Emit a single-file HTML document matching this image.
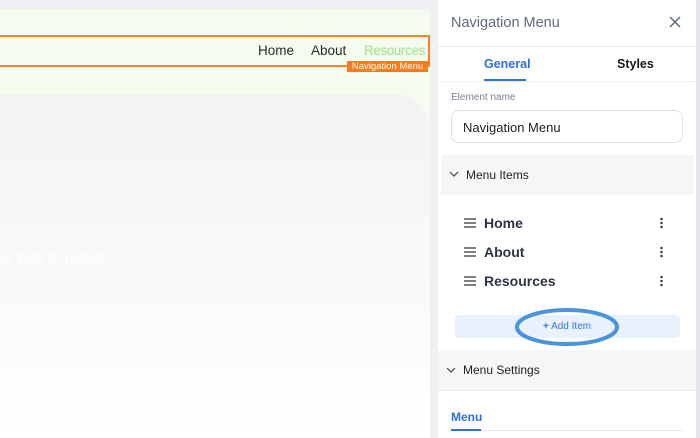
<!DOCTYPE html>
<html><head><style>
*{margin:0;padding:0;box-sizing:border-box}
body{width:700px;height:438px;overflow:hidden;position:relative;background:#eef0f3;font-family:"Liberation Sans",sans-serif}
.a{position:absolute}
.t{white-space:nowrap}
</style></head><body>
<div class="a" style="left:0;top:0;width:438px;height:438px;background:#eef0f3"></div>
<div class="a" style="left:0;top:9px;width:430px;height:429px;background:#f3fcee"></div>
<div class="a" style="left:0;top:35px;width:430px;height:32px;border:2px solid #fb8424;border-left:none"></div>
<div class="a t" style="left:258px;top:43px;font-size:13.5px;color:#2b2b2b">Home</div>
<div class="a t" style="left:311px;top:43px;font-size:13.5px;color:#2b2b2b">About</div>
<div class="a t" style="left:364px;top:43px;font-size:13.5px;color:#a6e08c;letter-spacing:-0.4px">Resources</div>
<div class="a t" style="left:347px;top:61px;width:81px;height:11px;background:#fb7a1a;color:#fff;font-size:9.5px;line-height:11px;text-align:center">Navigation Menu</div>
<div class="a" style="left:0;top:94px;width:430px;height:344px;border-top-right-radius:36px;background:linear-gradient(#f3f3f3,#ffffff)"></div>
<div class="a t" style="left:0;top:250px;font-size:15px;color:#fff">ur kids to grows</div>

<div class="a" style="left:438px;top:0;width:258px;height:438px;background:#fff"></div>
<div class="a" style="left:696px;top:0;width:4px;height:438px;background:#e3e7ed"></div>
<div class="a t" style="left:451px;top:15px;font-size:14.5px;color:#5f6b7a">Navigation Menu</div>
<svg class="a" style="left:669px;top:16px" width="12" height="12"><path d="M1 1L11 11M11 1L1 11" stroke="#5f6b7a" stroke-width="1.5"/></svg>
<div class="a" style="left:438px;top:46px;width:258px;height:1px;background:#e8ebef"></div>
<div class="a t" style="left:484px;top:57px;font-size:12.5px;font-weight:bold;color:#2f6fe0">General</div>
<div class="a" style="left:484px;top:79px;width:42px;height:2px;background:#2f6fe0"></div>
<div class="a t" style="left:617px;top:57px;font-size:12.5px;font-weight:bold;color:#1a1a1a">Styles</div>
<div class="a" style="left:438px;top:81px;width:258px;height:1px;background:#eef0f3"></div>
<div class="a t" style="left:451px;top:92px;font-size:10px;color:#7a8390">Element name</div>
<div class="a t" style="left:451px;top:110px;width:232px;height:33px;border:1px solid #dde1e6;border-radius:8px;padding:9px 0 0 11px;font-size:13px;color:#222">Navigation Menu</div>
<div class="a" style="left:441px;top:155px;width:253px;height:40px;background:#f6f6f7"></div>
<svg class="a" style="left:449px;top:171px" width="10" height="7"><path d="M1 1L5 5L9 1" stroke="#444" fill="none" stroke-width="1.2"/></svg>
<div class="a t" style="left:466px;top:168px;font-size:12px;color:#222">Menu Items</div>

<svg class="a" style="left:464px;top:218px" width="13" height="75"><g stroke="#555" stroke-width="1.4"><path d="M0 1H12M0 5H12M0 9H12M0 30H12M0 34H12M0 38H12M0 59H12M0 63H12M0 67H12"/></g></svg>
<div class="a t" style="left:484px;top:215px;font-size:14px;font-weight:bold;color:#2d3445">Home</div>
<div class="a t" style="left:484px;top:244px;font-size:14px;font-weight:bold;color:#2d3445">About</div>
<div class="a t" style="left:484px;top:273px;font-size:14px;font-weight:bold;color:#2d3445">Resources</div>
<svg class="a" style="left:659px;top:217px" width="5" height="72"><g fill="#444"><circle cx="2.5" cy="2" r="1.3"/><circle cx="2.5" cy="6" r="1.3"/><circle cx="2.5" cy="10" r="1.3"/><circle cx="2.5" cy="31" r="1.3"/><circle cx="2.5" cy="35" r="1.3"/><circle cx="2.5" cy="39" r="1.3"/><circle cx="2.5" cy="60" r="1.3"/><circle cx="2.5" cy="64" r="1.3"/><circle cx="2.5" cy="68" r="1.3"/></g></svg>

<div class="a" style="left:455px;top:315px;width:225px;height:23px;background:#e9f1fc;border-radius:4px"></div>
<div class="a t" style="left:543px;top:321px;font-size:10px;color:#2f79e0"><b>+</b> Add Item</div>
<svg class="a" style="left:510px;top:305px" width="115" height="44"><ellipse cx="57" cy="22" rx="50" ry="17" fill="none" stroke="#4a94dd" stroke-width="4"/></svg>

<div class="a" style="left:438px;top:350px;width:258px;height:40px;background:#f6f6f7"></div>
<svg class="a" style="left:446px;top:367px" width="10" height="7"><path d="M1 1L5 5L9 1" stroke="#444" fill="none" stroke-width="1.2"/></svg>
<div class="a t" style="left:463px;top:363px;font-size:12px;color:#222">Menu Settings</div>
<div class="a" style="left:438px;top:390px;width:258px;height:1px;background:#eceef1"></div>
<div class="a t" style="left:451px;top:410px;font-size:12px;font-weight:bold;color:#2f6fe0">Menu</div>
<div class="a" style="left:451px;top:430px;width:232px;height:1px;background:#e3e6ea"></div>
<div class="a" style="left:451px;top:429px;width:30px;height:2px;background:#2f6fe0"></div>
</body></html>
